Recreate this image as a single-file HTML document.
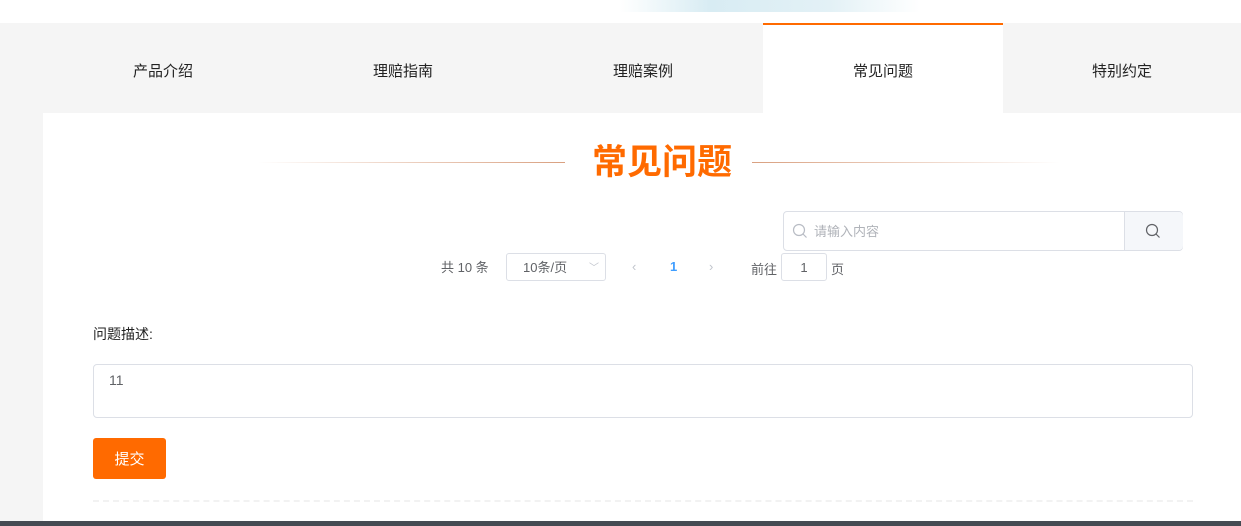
<!DOCTYPE html>
<html><head><meta charset="utf-8"><style>
body{margin:0;width:1241px;height:526px;overflow:hidden;background:#fff;font-family:"Liberation Sans","Noto Sans CJK SC",sans-serif;position:relative}
.a{position:absolute}
.tab{position:absolute;top:23px;height:90px;width:240px;line-height:98px;text-align:center;font-size:15px;color:#222;background:#f5f5f5}
</style></head><body>
<div class="a" style="left:620px;top:0;width:300px;height:12px;background:linear-gradient(90deg,#fff,#d8ecf3 30%,#e3f1f6 70%,#fff)"></div>
<div class="a" style="left:0;top:23px;width:43px;height:498px;background:#f5f5f5"></div>
<div class="tab" style="left:43px">产品介绍</div>
<div class="tab" style="left:283px">理赔指南</div>
<div class="tab" style="left:523px">理赔案例</div>
<div class="tab" style="left:763px;background:#fff;border-top:2px solid #ff6a00;height:88px;line-height:94px">常见问题</div>
<div class="tab" style="left:1003px;width:238px">特别约定</div>
<div class="a" style="left:258px;top:162px;width:307px;height:1px;background:linear-gradient(90deg,#fff,#d9a080)"></div>
<div class="a" style="left:752px;top:162px;width:308px;height:1px;background:linear-gradient(90deg,#d9a080,#fff)"></div>
<div class="a" style="left:565px;top:140px;width:194px;text-align:center;font-size:35px;font-weight:bold;color:#ff6a00;line-height:46px">常见问题</div>
<div class="a" style="left:783px;top:211px;width:398px;height:38px;border:1px solid #dcdfe6;border-radius:4px"></div>
<div class="a" style="left:1124px;top:212px;width:58px;height:38px;background:#f5f7fa;border-left:1px solid #dcdfe6;border-radius:0 4px 4px 0"></div>
<svg class="a" style="left:792px;top:223px" width="16" height="16" viewBox="0 0 16 16"><circle cx="7" cy="7" r="5.5" fill="none" stroke="#b8bcc4" stroke-width="1.2"/><path d="M11 11l3.5 3.5" stroke="#b8bcc4" stroke-width="1.2"/></svg>
<div class="a" style="left:814px;top:223px;font-size:13px;color:#b0b3b9;line-height:17px">请输入内容</div>
<svg class="a" style="left:1145px;top:223px" width="16" height="16" viewBox="0 0 16 16"><circle cx="7" cy="7" r="5.5" fill="none" stroke="#606266" stroke-width="1.2"/><path d="M11 11l3.5 3.5" stroke="#606266" stroke-width="1.2"/></svg>
<div class="a" style="left:441px;top:259px;font-size:13px;color:#606266;line-height:17px">共 10 条</div>
<div class="a" style="left:506px;top:253px;width:98px;height:26px;border:1px solid #dcdfe6;border-radius:3px"></div>
<div class="a" style="left:523px;top:259px;font-size:13px;color:#606266;line-height:17px">10条/页</div>
<div class="a" style="left:589px;top:259px;font-size:10px;color:#c0c4cc">﹀</div>
<div class="a" style="left:632px;top:259px;font-size:13px;color:#c0c4cc">‹</div>
<div class="a" style="left:670px;top:259px;font-size:13px;color:#409eff;font-weight:bold">1</div>
<div class="a" style="left:709px;top:259px;font-size:13px;color:#c0c4cc">›</div>
<div class="a" style="left:751px;top:259px;font-size:13px;color:#606266">前往</div>
<div class="a" style="left:781px;top:253px;width:44px;height:26px;border:1px solid #dcdfe6;border-radius:3px;text-align:center;line-height:27px;font-size:13px;color:#606266">1</div>
<div class="a" style="left:831px;top:259px;font-size:13px;color:#606266">页</div>
<div class="a" style="left:93px;top:325px;font-size:14px;color:#222;line-height:18px">问题描述:</div>
<div class="a" style="left:93px;top:364px;width:1098px;height:52px;border:1px solid #dcdfe6;border-radius:4px"></div>
<div class="a" style="left:109px;top:372px;font-size:14px;color:#606266">11</div>
<div class="a" style="left:93px;top:438px;width:73px;height:41px;background:#ff6a00;border-radius:3px;color:#fff;font-size:15px;text-align:center;line-height:44px">提交</div>
<div class="a" style="left:93px;top:500px;width:1100px;border-top:2px dashed #f2f2f2"></div>
<div class="a" style="left:0;top:521px;width:1241px;height:5px;background:#454a52"></div>
</body></html>
